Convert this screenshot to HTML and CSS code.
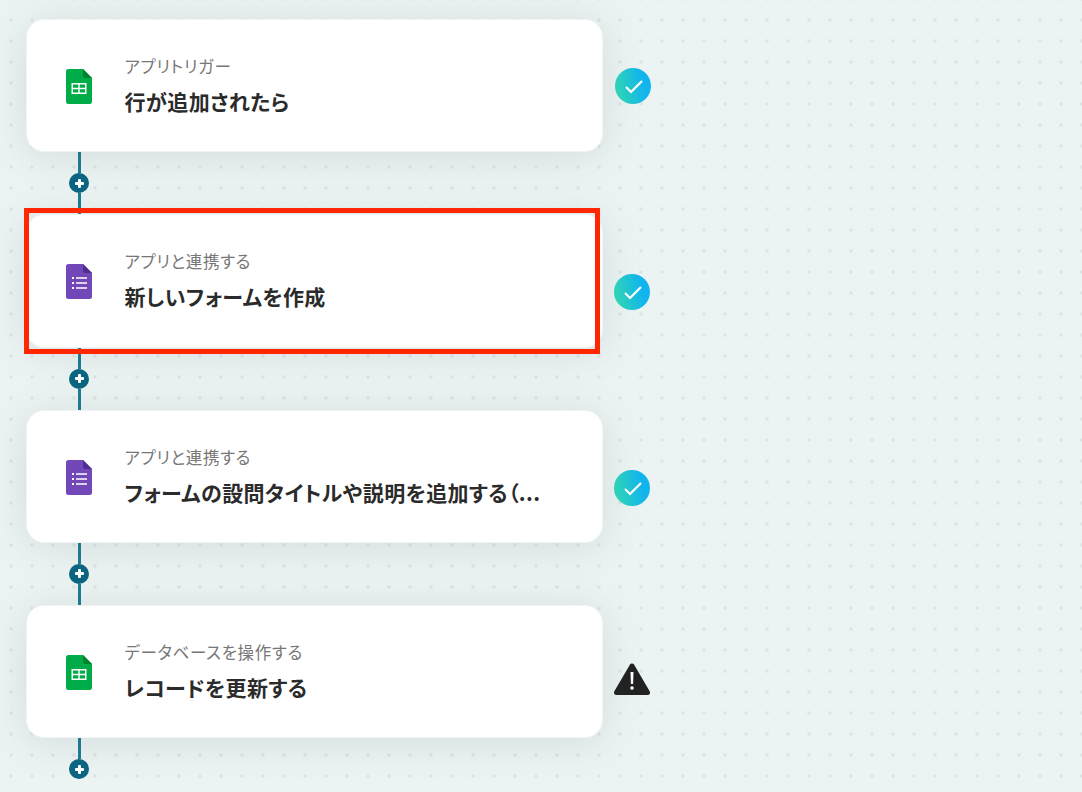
FILE: index.html
```html
<!DOCTYPE html>
<html lang="ja">
<head>
    <meta charset="UTF-8">
    <meta name="viewport" content="width=device-width, initial-scale=1.0">
    <title>フロー</title>
    <link rel="stylesheet" href="styles.css">
</head>
<body>
    <main class="flow">
        <section class="step">
            <div class="card">
                <svg class="app-icon" viewBox="0 0 26 35">
                    <path d="M2.500 0H17L26 9V32.500A2.500 2.500 0 0 1 23.500 35H2.500A2.500 2.500 0 0 1 0 32.500V2.500A2.500 2.500 0 0 1 2.500 0Z" fill="#00ac47"/>
                    <path d="M17 0L26 9H19A2 2 0 0 1 17 7Z" fill="#00832d"/>
                    <path d="M5.500 14H20.500V25H5.500ZM7 15.500V18.800H12.300V15.500ZM13.700 15.500V18.800H19V15.500ZM7 20.200V23.500H12.300V20.200ZM13.700 20.200V23.500H19V20.200Z" fill="#fff" fill-rule="evenodd"/>
                </svg>
                <div class="card-text">
                    <p class="card-label">アプリトリガー</p>
                    <p class="card-title">行が追加されたら</p>
                </div>
            </div>
            <svg class="status status-first" viewBox="0 0 36 36">
                <circle cx="18" cy="18" r="18" fill="url(#done-a)"/>
                <path d="M11 19L16 24L27 13" fill="none" stroke="#fff" stroke-width="2.200"/>
                <defs>
                    <linearGradient id="done-a" x1="0" y1="0.600" x2="1" y2="0.400">
                        <stop offset="0.100" stop-color="#2dd6bd"/>
                        <stop offset="0.800" stop-color="#12b4ee"/>
                    </linearGradient>
                </defs>
            </svg>
        </section>
        <div class="connector">
            <span class="line"></span>
            <span class="plus"></span>
            <span class="line"></span>
        </div>

        <section class="step">
            <div class="card">
                <svg class="app-icon" viewBox="0 0 26 35">
                    <path d="M2.500 0H17L26 9V32.500A2.500 2.500 0 0 1 23.500 35H2.500A2.500 2.500 0 0 1 0 32.500V2.500A2.500 2.500 0 0 1 2.500 0Z" fill="#7248b9"/>
                    <path d="M17 0L26 9H19A2 2 0 0 1 17 7Z" fill="#4f2d91"/>
                    <path d="M6 13H8V15H6ZM6 18H8V20H6ZM6 23H8V25H6ZM10 13.200H21V14.800H10ZM10 18.200H21V19.800H10ZM10 23.200H21V24.800H10Z" fill="#fff"/>
                </svg>
                <div class="card-text">
                    <p class="card-label">アプリと連携する</p>
                    <p class="card-title">新しいフォームを作成</p>
                </div>
                <div class="highlight"></div>
            </div>
            <svg class="status status-low" viewBox="0 0 36 36">
                <circle cx="18" cy="18" r="18" fill="url(#done-a)"/>
                <path d="M11 19L16 24L27 13" fill="none" stroke="#fff" stroke-width="2.200"/>
            </svg>
        </section>
        <div class="connector">
            <span class="line"></span>
            <span class="plus"></span>
            <span class="line"></span>
        </div>

        <section class="step">
            <div class="card">
                <svg class="app-icon" viewBox="0 0 26 35">
                    <path d="M2.500 0H17L26 9V32.500A2.500 2.500 0 0 1 23.500 35H2.500A2.500 2.500 0 0 1 0 32.500V2.500A2.500 2.500 0 0 1 2.500 0Z" fill="#7248b9"/>
                    <path d="M17 0L26 9H19A2 2 0 0 1 17 7Z" fill="#4f2d91"/>
                    <path d="M6 13H8V15H6ZM6 18H8V20H6ZM6 23H8V25H6ZM10 13.200H21V14.800H10ZM10 18.200H21V19.800H10ZM10 23.200H21V24.800H10Z" fill="#fff"/>
                </svg>
                <div class="card-text">
                    <p class="card-label">アプリと連携する</p>
                    <p class="card-title">フォームの設問タイトルや説明を追加する（...</p>
                </div>
            </div>
            <svg class="status status-mid" viewBox="0 0 36 36">
                <circle cx="18" cy="18" r="18" fill="url(#done-a)"/>
                <path d="M11 19L16 24L27 13" fill="none" stroke="#fff" stroke-width="2.200"/>
            </svg>
        </section>
        <div class="connector">
            <span class="line"></span>
            <span class="plus"></span>
            <span class="line"></span>
        </div>

        <section class="step">
            <div class="card">
                <svg class="app-icon" viewBox="0 0 26 35">
                    <path d="M2.500 0H17L26 9V32.500A2.500 2.500 0 0 1 23.500 35H2.500A2.500 2.500 0 0 1 0 32.500V2.500A2.500 2.500 0 0 1 2.500 0Z" fill="#00ac47"/>
                    <path d="M17 0L26 9H19A2 2 0 0 1 17 7Z" fill="#00832d"/>
                    <path d="M5.500 14H20.500V25H5.500ZM7 15.500V18.800H12.300V15.500ZM13.700 15.500V18.800H19V15.500ZM7 20.200V23.500H12.300V20.200ZM13.700 20.200V23.500H19V20.200Z" fill="#fff" fill-rule="evenodd"/>
                </svg>
                <div class="card-text">
                    <p class="card-label">データベースを操作する</p>
                    <p class="card-title">レコードを更新する</p>
                </div>
            </div>
            <svg class="status status-warning" viewBox="0 0 36 33">
                <path d="M18 3L33.500 29.500H2.500Z" fill="#222" stroke="#222" stroke-width="5" stroke-linejoin="round"/>
                <path d="M16.500 9H19.500L19.100 21H16.900Z" fill="#fff"/>
                <circle cx="18" cy="25" r="1.800" fill="#fff"/>
            </svg>
        </section>
        <div class="connector">
            <span class="line"></span>
            <span class="plus"></span>
            <span class="line line-empty"></span>
        </div>
    </main>
</body>
</html>
```

FILE: styles.css
```css
html, body {
    height: 100%;
}

body {
    margin: 0;
    overflow: hidden;
    font-family: "Noto Sans CJK JP", "Noto Sans", sans-serif;
    font-feature-settings: "palt";
    color: #2b2b2b;
    background-color: #ecf3f3;
    background-image: radial-gradient(circle, #dbe3e3 1.5px, transparent 2px);
    background-size: 21px 21px;
    background-position: 0.5px 9.5px;
}

.flow {
    padding: 19px 0 0 25.5px;
}

.step {
    display: flex;
}

.card {
    position: relative;
    box-sizing: border-box;
    display: flex;
    width: 577.5px;
    height: 133.33px;
    padding-left: 39.5px;
    align-items: center;
    background-color: white;
    border: 1px solid #f0f4f4;
    border-radius: 18px;
    box-shadow: 0 4px 40px rgba(60, 90, 90, 0.14);
}

.app-icon {
    width: 26px;
    height: 35px;
    flex-shrink: 0;
    margin-top: 2px;
}

.card-text {
    margin-left: 32.5px;
    margin-top: -1px;
}

.card-label {
    margin: 0 0 8px;
    font-size: 16.5px;
    line-height: 24px;
    letter-spacing: 0.04em;
    color: #777;
}

.card-title {
    margin: 0;
    font-size: 21px;
    line-height: 30px;
    font-weight: 700;
    letter-spacing: 0.4px;
}

/* red frame drawn on top of the card */
.highlight {
    position: absolute;
    top: -7.33px;
    bottom: -7.33px;
    left: -2.5px;
    right: 2px;
    border: 5px solid #ff2600;
    z-index: 2;
}

.status {
    width: 36px;
    height: 36px;
    flex-shrink: 0;
    margin-left: 11px;
    align-self: center;
}

.status-first {
    margin-left: 12px;
    margin-top: 1px;
}

.status-low {
    margin-top: 22px;
}

.status-mid {
    margin-top: 24px;
}

.status-warning {
    height: 33px;
    margin-top: 16px;
}

.connector {
    display: flex;
    flex-direction: column;
    align-items: center;
    width: 20px;
    height: 62px;
    margin-left: 43.5px;
}

.line {
    flex: 1;
    width: 3px;
    background-color: #1f7a94;
}

.line-empty {
    background-color: transparent;
}

.plus {
    position: relative;
    flex-shrink: 0;
    width: 20px;
    height: 20px;
    border-radius: 50%;
    background-color: #0b6580;
}

.plus::before,
.plus::after {
    content: "";
    position: absolute;
    background-color: white;
    border-radius: 1px;
}

.plus::before {
    left: 5.5px;
    top: 8.5px;
    width: 9px;
    height: 3px;
}

.plus::after {
    left: 8.5px;
    top: 5.5px;
    width: 3px;
    height: 9px;
}
```
